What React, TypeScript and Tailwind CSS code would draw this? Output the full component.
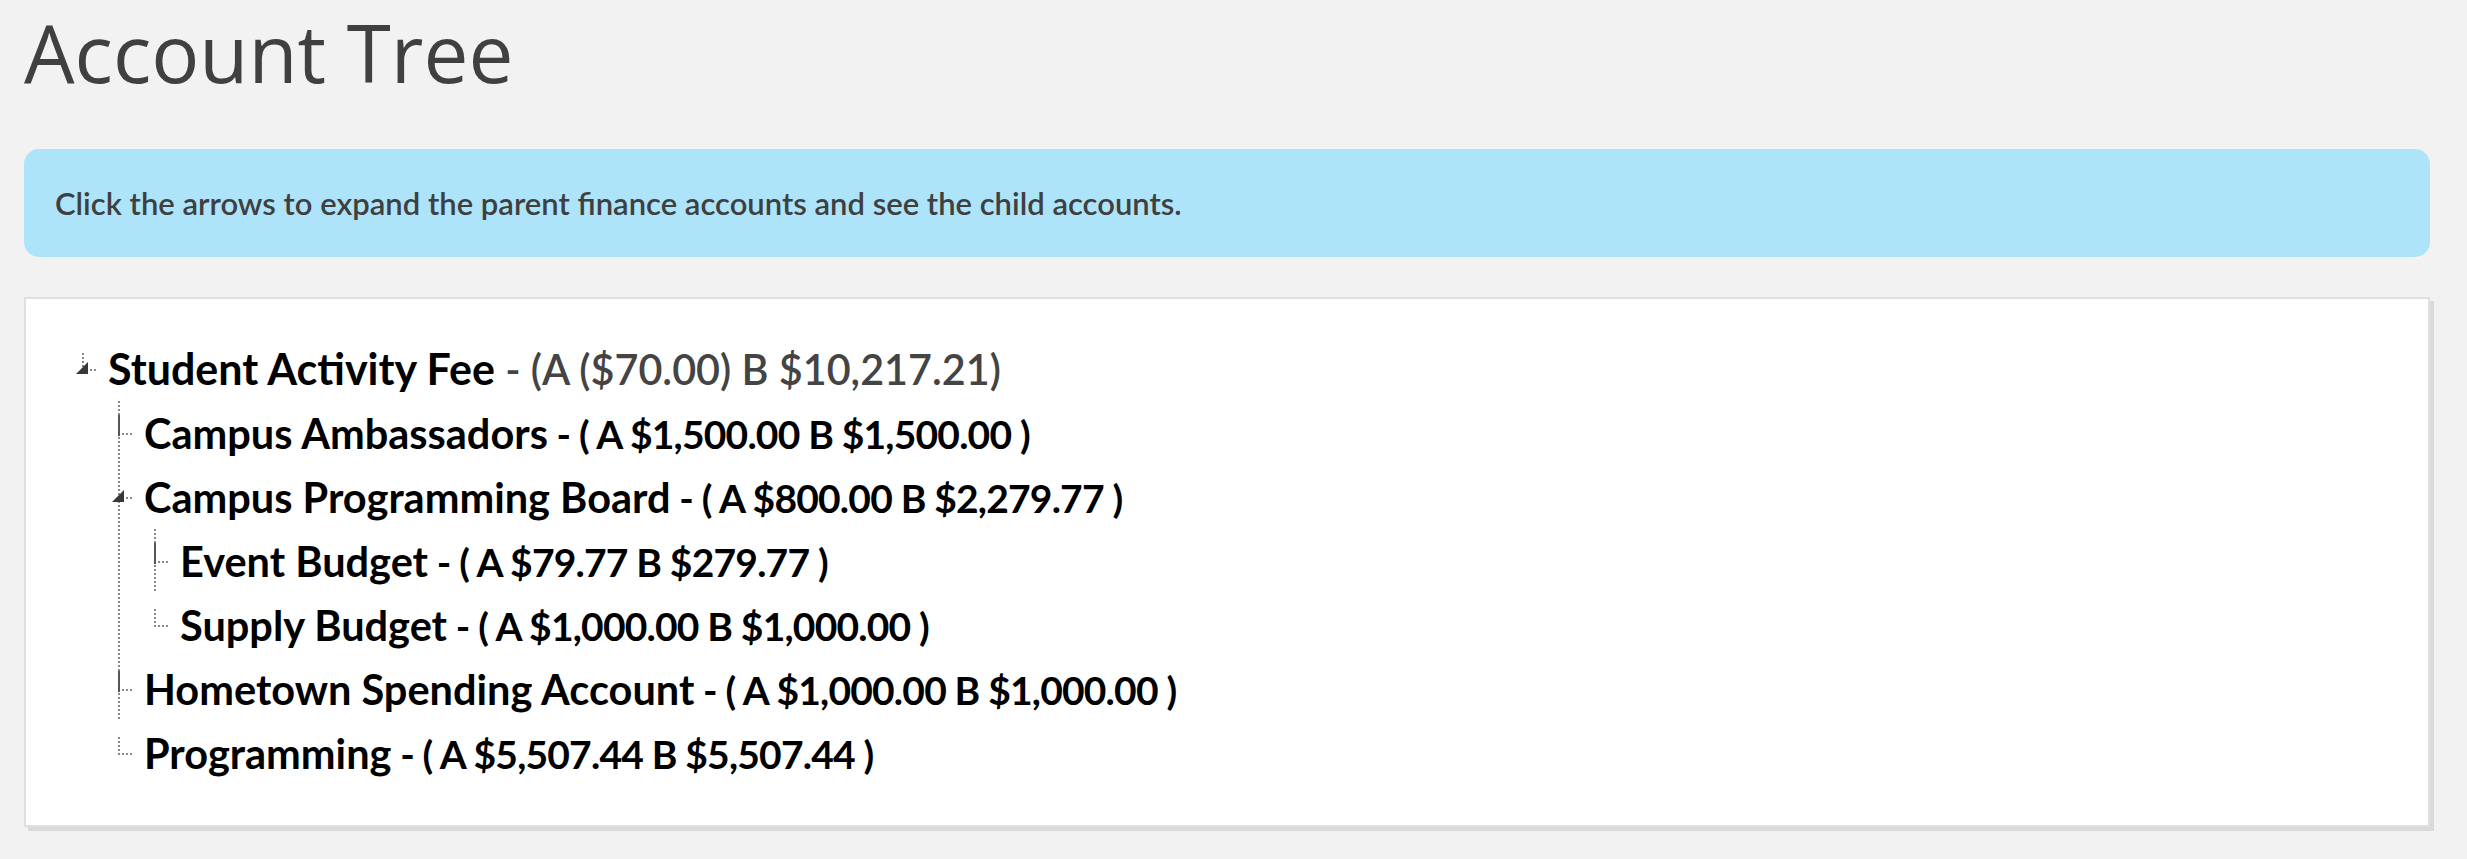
type Account = {
  name: string;
  amount: string;
  root?: boolean;
  children?: Account[];
};

const ROOT: Account = {
  name: "Student Activity Fee",
  amount: "- (A ($70.00) B $10,217.21)",
  root: true,
  children: [
    { name: "Campus Ambassadors", amount: "- ( A $1,500.00 B $1,500.00 )" },
    {
      name: "Campus Programming Board",
      amount: "- ( A $800.00 B $2,279.77 )",
      children: [
        { name: "Event Budget", amount: "- ( A $79.77 B $279.77 )" },
        { name: "Supply Budget", amount: "- ( A $1,000.00 B $1,000.00 )" },
      ],
    },
    { name: "Hometown Spending Account", amount: "- ( A $1,000.00 B $1,000.00 )" },
    { name: "Programming", amount: "- ( A $5,507.44 B $5,507.44 )" },
  ],
};

const DOTS = "#888";

function Connector({ open, last }: { open: boolean; last: boolean }) {
  return (
    <svg width="36" height="64" viewBox="0 0 36 64" className="block shrink-0">
      <line
        x1="11"
        y1={last ? 16 : 0}
        x2="11"
        y2={last ? 34 : 64}
        stroke={DOTS}
        strokeWidth="2"
        strokeDasharray="2 2"
      />
      {!open && !last && <line x1="11" y1="14" x2="11" y2="35" stroke="#555" strokeWidth="2" />}
      <line x1="14" y1="33" x2="25" y2="33" stroke={DOTS} strokeWidth="2" strokeDasharray="2 2" />
      {open && <polygon points="4,37 16,37 16,25" fill="#383838" />}
    </svg>
  );
}

function TreeNode({ node, last }: { node: Account; last: boolean }) {
  const kids = node.children ?? [];
  return (
    <li className="flex">
      <div className="flex w-[36px] shrink-0 flex-col">
        <Connector open={kids.length > 0} last={last} />
        {!last && (
          <div className="ml-[10px] w-[2px] flex-1 bg-[repeating-linear-gradient(to_bottom,#888_0px,#888_2px,transparent_2px,transparent_4px)]" />
        )}
      </div>
      <div className="flex flex-col">
        {node.root ? (
          <div className="h-[64px] whitespace-nowrap leading-[64px]">
            <span className="text-[43px] font-bold text-black">{node.name}</span>
            <span className="text-[41.3px] font-semibold text-[#444]"> {node.amount}</span>
          </div>
        ) : (
          <div className="h-[64px] whitespace-nowrap font-bold leading-[64px] text-black">
            <span className="text-[41.5px]">{node.name}</span>
            <span className="text-[39px] tracking-[-0.8px]"> {node.amount}</span>
          </div>
        )}
        {kids.length > 0 && (
          <ul>
            {kids.map((k, i) => (
              <TreeNode key={k.name} node={k} last={i === kids.length - 1} />
            ))}
          </ul>
        )}
      </div>
    </li>
  );
}

export default function App() {
  return (
    <div className="min-h-[859px] bg-[#f2f2f2] pl-[24px] pr-[37px] font-['Lato',sans-serif]">
      <h1 className="pt-[7px] font-['Open_Sans',sans-serif] text-[80px] font-normal leading-[89px] text-[#404040]">
        Account Tree
      </h1>

      <div className="mt-[53px] flex h-[108px] items-center rounded-[15px] bg-[#ade4fa] pl-[31px] text-[31px] font-semibold text-[#3f3f3f]">
        Click the arrows to expand the parent finance accounts and see the child accounts.
      </div>

      <div className="mt-[40px] border-2 border-[#e0e0e0] bg-white pb-[40px] pl-[46px] pt-[38px] shadow-[4px_4px_0_#dadada]">
        <ul>
          <TreeNode node={ROOT} last={true} />
        </ul>
      </div>
    </div>
  );
}
